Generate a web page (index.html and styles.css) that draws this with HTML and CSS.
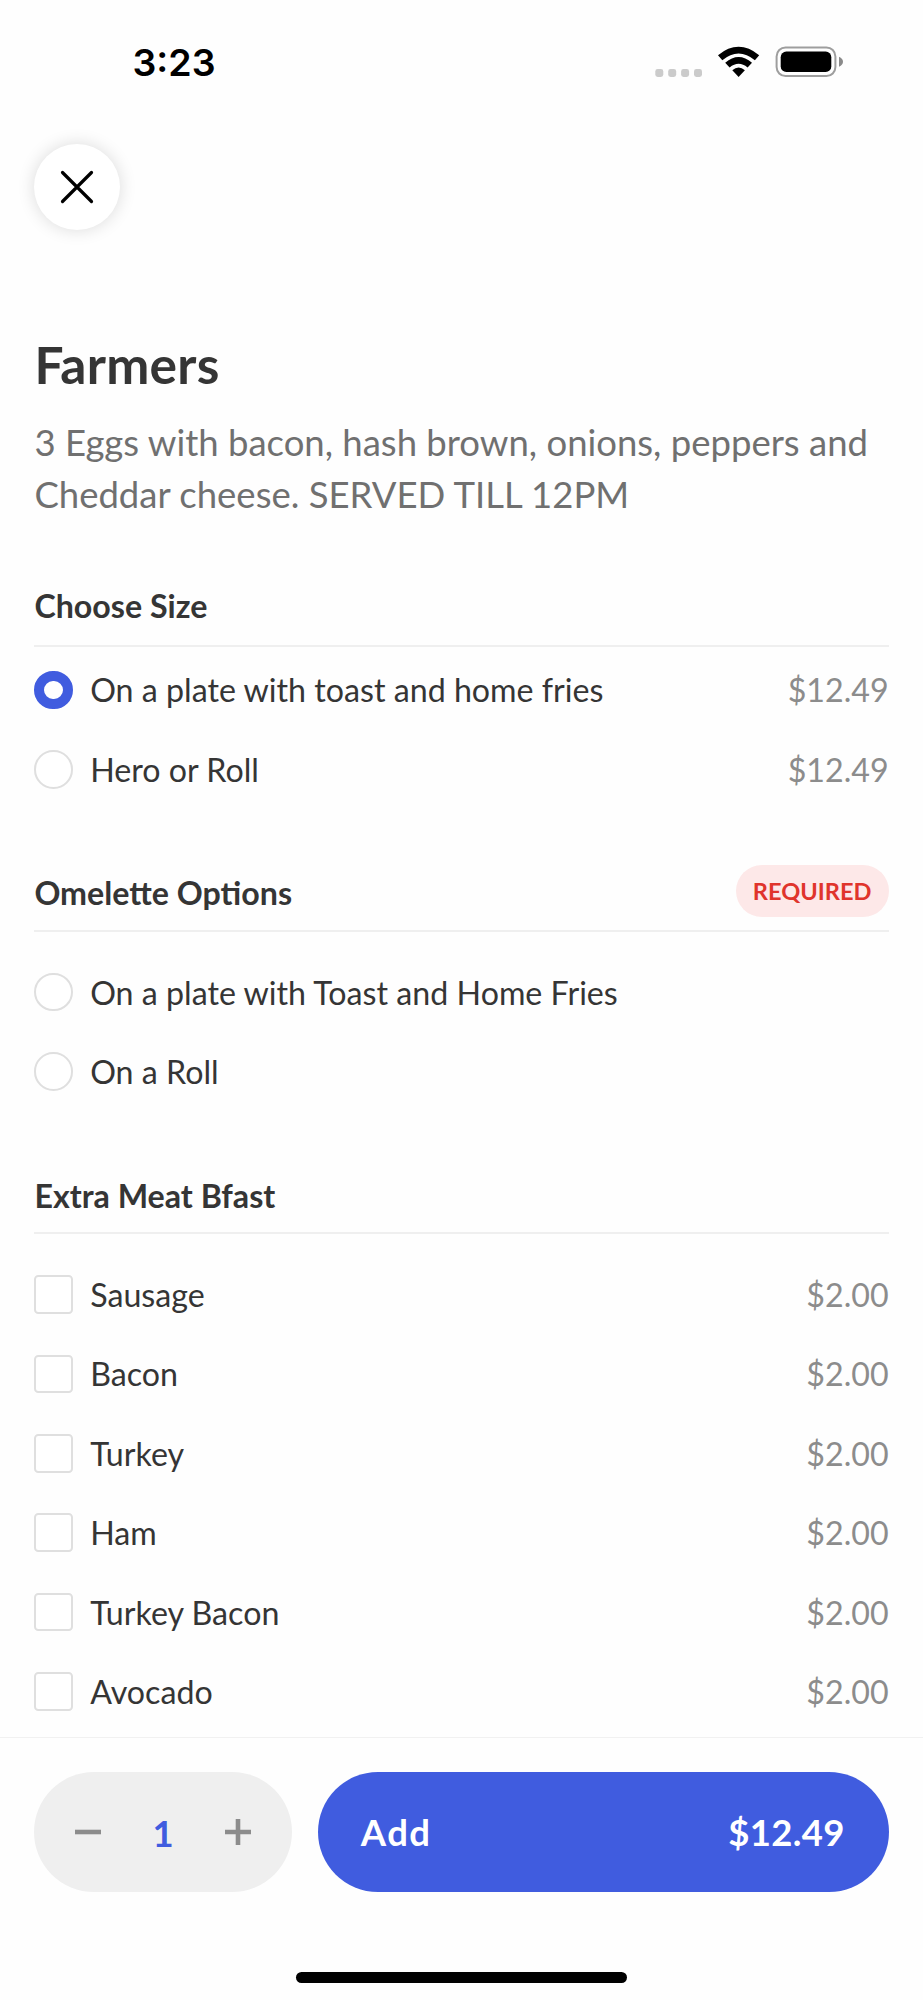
FILE: index.html
```html
<!DOCTYPE html>
<html lang="en">
<head>
<meta charset="utf-8">
<title>Farmers</title>
<link rel="stylesheet" href="styles.css">
</head>
<body>
<div class="screen">
  <header class="status">
    <span class="time">3:23</span>
    <svg class="indicators" width="190" height="34" viewBox="0 0 190 34" aria-hidden="true">
      <g fill="#cbcbcb">
        <rect x="0.3" y="24" width="8" height="8" rx="2.4"/>
        <rect x="13.2" y="24" width="8" height="8" rx="2.4"/>
        <rect x="26.1" y="24" width="8" height="8" rx="2.4"/>
        <rect x="39" y="24" width="8" height="8" rx="2.4"/>
      </g>
      <g fill="#000">
        <path d="M63 10.2Q83.6-6.6 104.200 10.2L99.900 15.200Q83.600 1.600 67.300 15.200Z"/>
        <path d="M70.200 17.800Q83.600 6.200 97 17.800L92.600 22.400Q83.600 14.900 74.600 22.400Z"/>
        <path d="M77.300 25.300Q83.600 19.700 89.900 25.300L83.600 31.900Z"/>
      </g>
      <rect x="121.600" y="2.400" width="58.800" height="28.700" rx="9" fill="none" stroke="#9e9e9e" stroke-width="2"/>
      <rect x="125.700" y="6.600" width="50.600" height="20.400" rx="5.600" fill="#000"/>
      <path d="M184 11.800Q188 13.600 188 16.800T184 21.800Z" fill="#8a8a8a"/>
    </svg>
  </header>

  <button class="close" aria-label="Close">
    <svg width="34" height="34" viewBox="0 0 34 34"><path d="M2.500 2.500 31.500 31.500M31.500 2.500 2.500 31.500" stroke="#000" stroke-width="3.200" stroke-linecap="round"/></svg>
  </button>

  <main class="content">
    <h1 class="title">Farmers</h1>
    <p class="description">3 Eggs with bacon, hash brown, onions, peppers and Cheddar cheese. SERVED TILL 12PM</p>

    <section class="group group-compact">
      <div class="group-head"><h2 class="group-title">Choose Size</h2></div>
      <div class="options">
        <label class="option"><span class="radio radio-on"></span><span class="name">On a plate with toast and home fries</span><span class="price">$12.49</span></label>
        <label class="option"><span class="radio"></span><span class="name">Hero or Roll</span><span class="price">$12.49</span></label>
      </div>
    </section>

    <section class="group">
      <div class="group-head"><h2 class="group-title">Omelette Options</h2><span class="badge">REQUIRED</span></div>
      <div class="options">
        <label class="option"><span class="radio"></span><span class="name">On a plate with Toast and Home Fries</span></label>
        <label class="option"><span class="radio"></span><span class="name">On a Roll</span></label>
      </div>
    </section>

    <section class="group">
      <div class="group-head"><h2 class="group-title">Extra Meat Bfast</h2></div>
      <div class="options">
        <label class="option"><span class="check"></span><span class="name">Sausage</span><span class="price">$2.00</span></label>
        <label class="option"><span class="check"></span><span class="name">Bacon</span><span class="price">$2.00</span></label>
        <label class="option"><span class="check"></span><span class="name">Turkey</span><span class="price">$2.00</span></label>
        <label class="option"><span class="check"></span><span class="name">Ham</span><span class="price">$2.00</span></label>
        <label class="option"><span class="check"></span><span class="name">Turkey Bacon</span><span class="price">$2.00</span></label>
        <label class="option"><span class="check"></span><span class="name">Avocado</span><span class="price">$2.00</span></label>
      </div>
    </section>
  </main>

  <footer class="footer">
    <div class="actions">
      <div class="stepper">
        <svg width="26" height="26" viewBox="0 0 26 26"><path d="M0 13H26" stroke="#8c8c8c" stroke-width="4.600"/></svg>
        <span class="quantity">1</span>
        <svg width="26" height="26" viewBox="0 0 26 26"><path d="M0 13H26M13 0V26" stroke="#8c8c8c" stroke-width="4.600"/></svg>
      </div>
      <button class="add"><span class="add-label">Add</span><span class="total">$12.49</span></button>
    </div>
    <div class="home-bar"></div>
  </footer>
</div>
</body>
</html>
```
FILE: styles.css
```css
* { box-sizing: border-box; }

body {
  margin: 0;
  background: #fefefe;
  color: #353535;
  font-family: Lato, "Liberation Sans", sans-serif;
}

button { border: 0; padding: 0; font: inherit; }

.screen {
  display: flex;
  flex-direction: column;
  width: 923px;
  height: 2000px;
  overflow: hidden;
}

.status {
  display: flex;
  justify-content: space-between;
  align-items: flex-start;
  flex: none;
  height: 144px;
  padding: 45px 78px 0 132.5px;
}

.time {
  color: #000;
  font: 600 37.5px/36px Inter, "Liberation Sans", sans-serif;
}

.close {
  display: flex;
  align-items: center;
  justify-content: center;
  flex: none;
  width: 86px;
  height: 86px;
  margin-left: 34.4px;
  border-radius: 50%;
  background: #fff;
  box-shadow: 0 0 17px rgba(0, 0, 0, 0.14);
}

.content {
  flex: 1;
  min-height: 0;
  padding: 102.6px 34.4px 0;
}

.title {
  margin: 0 0 22.8px;
  font-size: 51.5px;
  line-height: 62px;
  font-weight: 700;
  letter-spacing: 0.25px;
}

.description {
  margin: 0;
  color: #707070;
  font-size: 36.5px;
  line-height: 51.5px;
}

.group { margin-top: 76.8px; }
.group-compact { margin-top: 60.1px; }

.group-head {
  display: flex;
  align-items: flex-end;
  justify-content: space-between;
  height: 66.5px;
  padding-bottom: 13px;
  border-bottom: 2px solid #efefef;
}

.group-title {
  margin: 0 0 3.8px;
  font-size: 32.2px;
  line-height: 38.6px;
  font-weight: 700;
}

.group-compact .group-title { margin-bottom: 6.4px; }

.badge {
  height: 51.4px;
  padding: 0 17.2px;
  border-radius: 26px;
  background: #fde8e8;
  color: #e0342c;
  font-size: 23.6px;
  font-weight: 700;
  line-height: 52px;
}

.options {
  display: flex;
  flex-direction: column;
  gap: 40.8px;
  padding-top: 41px;
}

.group-compact .options { padding-top: 23.6px; }

.option {
  display: flex;
  align-items: center;
  gap: 17.2px;
  height: 38.6px;
  font-size: 32.2px;
  line-height: 38.6px;
}

.name { flex: 1; }

.name,
.price { padding-top: 1.6px; }

.price { color: #8c8c8c; }

.radio,
.check {
  flex: none;
  width: 38.6px;
  height: 38.6px;
  border: 2px solid #dfdfdf;
  background: #fff;
}

.radio { border-radius: 50%; }
.check { border-radius: 4.3px; }
.radio-on { border: 10.7px solid #405cdf; }

.footer {
  flex: none;
  height: 263px;
  border-top: 1px solid #f1f1f1;
  background: #fefefe;
}

.actions {
  display: flex;
  gap: 25.8px;
  padding: 34.3px 34.4px 0;
}

.stepper {
  display: flex;
  align-items: center;
  justify-content: space-between;
  width: 257.6px;
  height: 120.2px;
  padding: 0 40.8px;
  border-radius: 60.1px;
  background: #efefef;
}

.quantity {
  padding-top: 1px;
  color: #405cdf;
  font-size: 36.5px;
  font-weight: 700;
}

.add {
  display: flex;
  align-items: center;
  justify-content: space-between;
  flex: 1;
  height: 120.2px;
  padding: 0 44px 0 43px;
  border-radius: 60.1px;
  background: #405cdf;
  color: #fff;
  font-size: 36.5px;
  font-weight: 700;
}

.add-label { letter-spacing: 1.4px; }
.total { letter-spacing: 0.3px; }

.home-bar {
  width: 331px;
  height: 11px;
  margin: 79.5px auto 0;
  border-radius: 6px;
  background: #000;
}
```
